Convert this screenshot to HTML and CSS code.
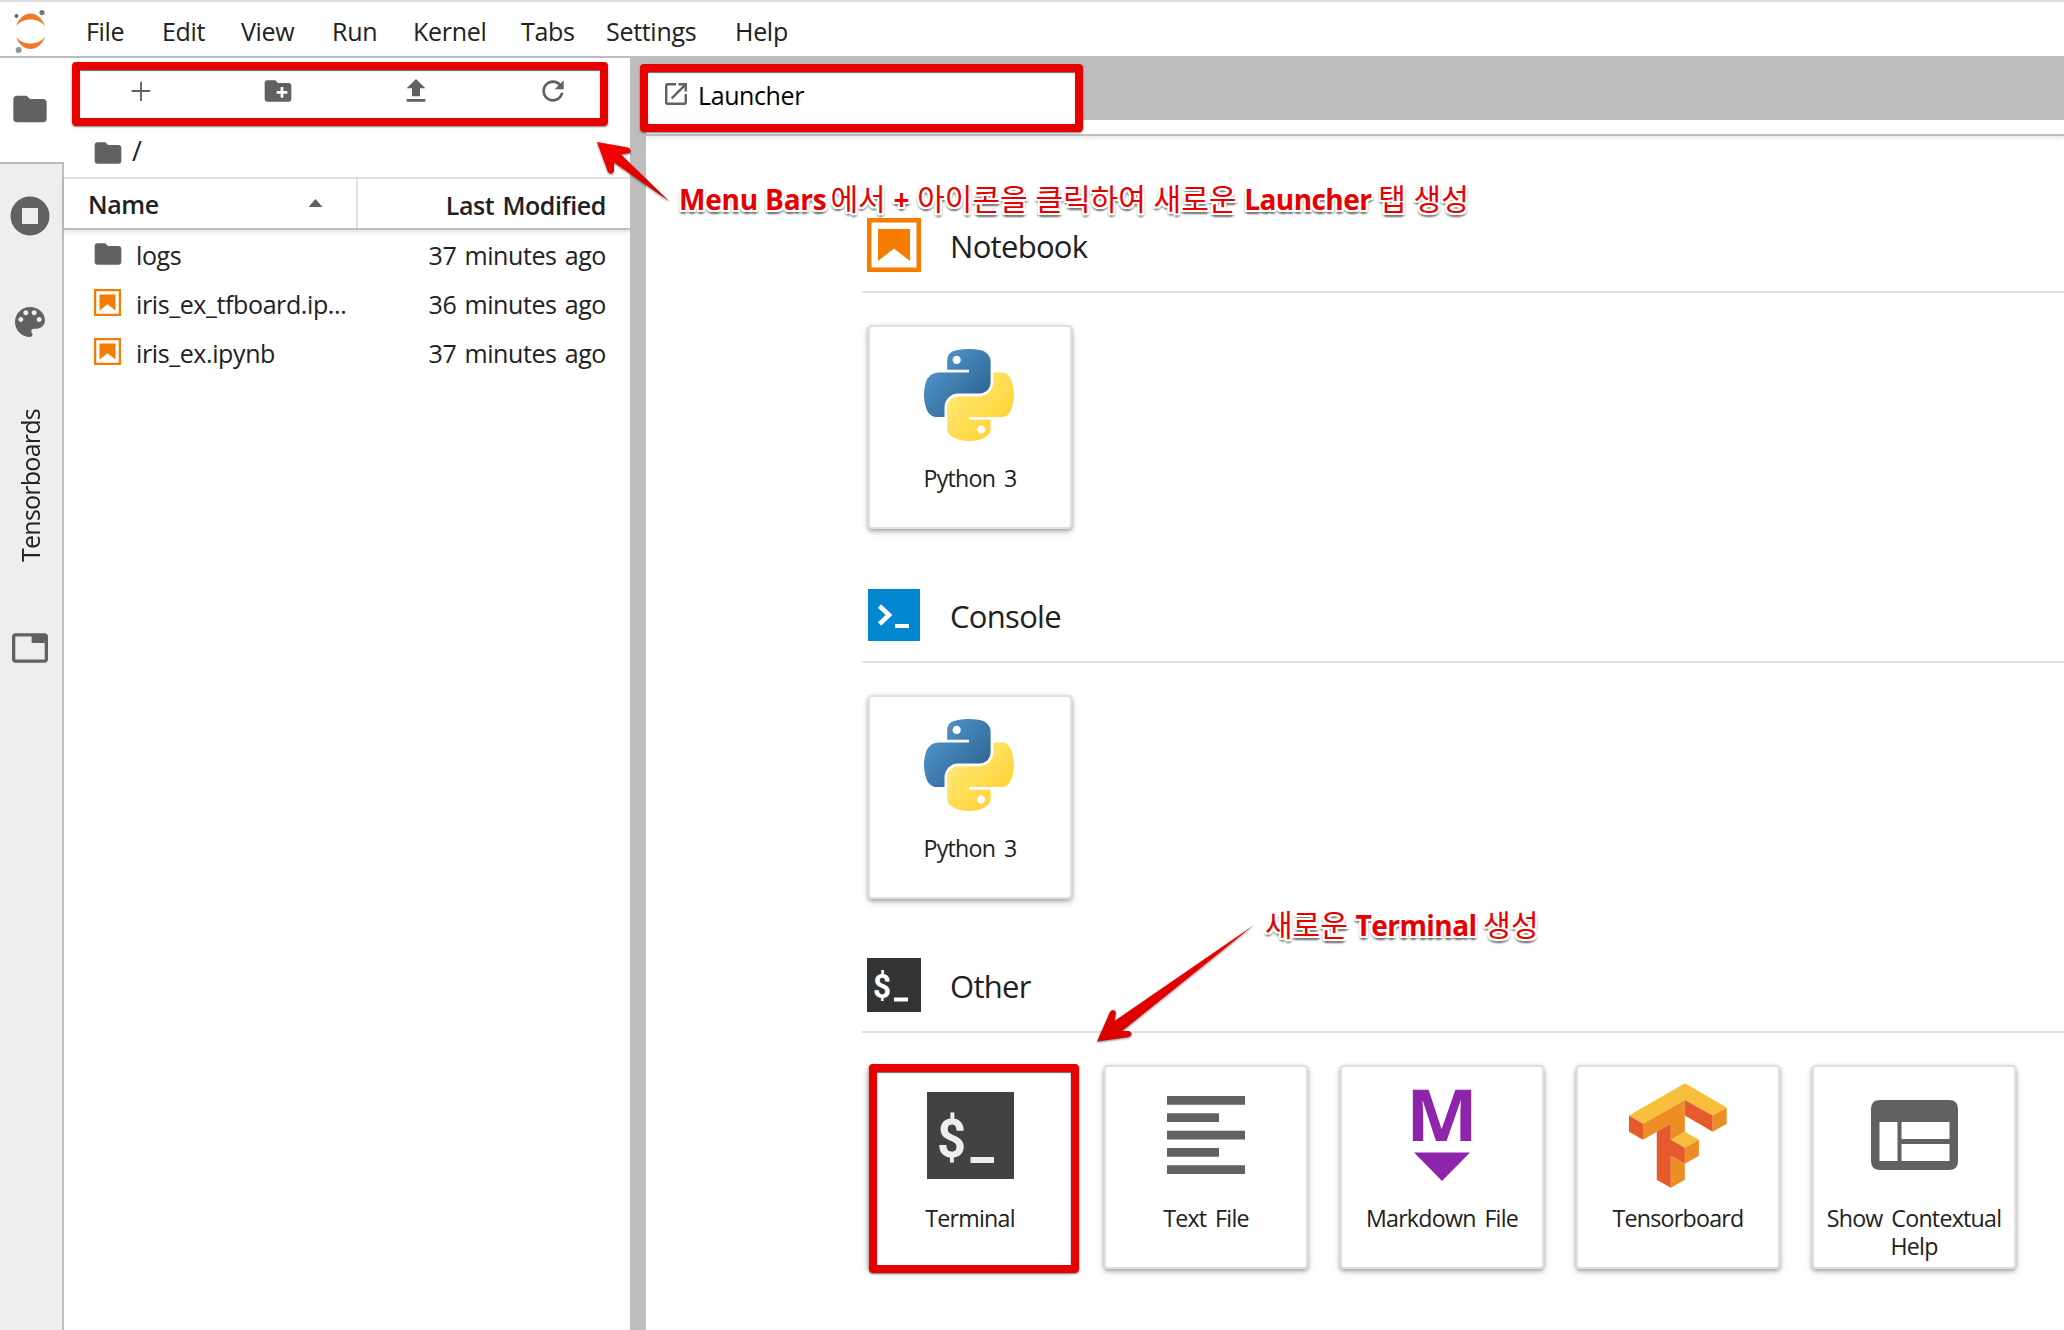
FILE: index.html
```html
<!DOCTYPE html>
<html lang="ko">
<head>
<meta charset="utf-8">
<title>JupyterLab</title>
<link rel="stylesheet" href="styles.css">
</head>
<body>
<svg class="defs" aria-hidden="true">
  <defs>
    <linearGradient id="py-blue" x1="0" y1="0" x2="0.8" y2="0.75"><stop offset="0" stop-color="#5a9fd4"/><stop offset="1" stop-color="#306998"/></linearGradient>
    <linearGradient id="py-yellow" x1="0.2" y1="0.2" x2="0.75" y2="0.75"><stop offset="0" stop-color="#ffe873"/><stop offset="1" stop-color="#ffd43b"/></linearGradient>
    <symbol id="folder" viewBox="0 0 24 24"><path d="M10 4H4c-1.1 0-1.99.9-1.99 2L2 18c0 1.1.9 2 2 2h16c1.1 0 2-.9 2-2V8c0-1.1-.9-2-2-2h-8l-2-2z"/></symbol>
    <symbol id="notebook" viewBox="0 0 54 54"><path fill="#f57c00" fill-rule="evenodd" d="M0 0H54V54H0zM4.5 4.5V49.500H49.500V4.500zM11 11H43V43L27 30.500L11 43z"/></symbol>
    <symbol id="python" viewBox="5.6 6.4 111.200 112.300" preserveAspectRatio="none">
      <path fill="url(#py-blue)" d="M60.510 6.398C55.927 6.419 51.549 6.810 47.698 7.492 36.351 9.496 34.291 13.692 34.291 21.429V31.648H61.104V35.054H24.229C16.436 35.054 9.613 39.738 7.479 48.648 5.017 58.861 4.908 65.234 7.479 75.898 9.385 83.836 13.936 89.492 21.729 89.492H30.948V77.242C30.948 68.392 38.605 60.585 47.698 60.585H74.479C81.934 60.585 87.885 54.447 87.885 46.960V21.429C87.885 14.163 81.755 8.704 74.479 7.492 69.873 6.725 65.094 6.377 60.510 6.398zM46.010 14.617C48.780 14.617 51.041 16.915 51.041 19.742 51.041 22.558 48.780 24.835 46.010 24.835 43.231 24.835 40.979 22.558 40.979 19.742 40.979 16.915 43.231 14.617 46.010 14.617z"/>
      <path fill="url(#py-yellow)" d="M91.229 35.054V46.960C91.229 56.191 83.403 63.960 74.479 63.960H47.698C40.362 63.960 34.291 70.239 34.291 77.585V103.117C34.291 110.383 40.610 114.657 47.698 116.742 56.185 119.237 64.324 119.688 74.479 116.742 81.229 114.787 87.885 110.854 87.885 103.117V92.898H61.104V89.492H101.291C109.084 89.492 111.988 84.056 114.698 75.898 117.497 67.499 117.378 59.422 114.698 48.648 112.772 40.891 109.094 35.054 101.291 35.054zM76.166 99.710C78.946 99.710 81.198 101.988 81.198 104.804 81.198 107.631 78.946 109.929 76.166 109.929 73.397 109.929 71.135 107.631 71.135 104.804 71.135 101.988 73.397 99.710 76.166 99.710z"/>
    </symbol>
  </defs>
</svg>

<div class="app">
  <header class="menubar">
    <svg class="logo" viewBox="0 0 34 44">
      <path fill="#f37726" d="M2 17C5 9 11 4.500 16.500 4.500S28 9 31 17C27 12.500 22 10.500 16.500 10.500S6 12.500 2 17zM2 28C5 36 11 40 16.500 40S28 36 31 28C27 32.500 22 34.500 16.500 34.500S6 32.500 2 28z"/>
      <circle cx="28" cy="3.600" r="2.600" fill="#767677"/><circle cx="2.500" cy="7" r="1.900" fill="#616262"/><circle cx="4.600" cy="41" r="3" fill="#989798"/>
    </svg>
    <nav class="menus"><span>File</span><span>Edit</span><span>View</span><span>Run</span><span>Kernel</span><span>Tabs</span><span>Settings</span><span>Help</span></nav>
  </header>

  <div class="workspace">
    <aside class="activity">
      <div class="act act-current"><svg class="i40"><use href="#folder"/></svg></div>
      <div class="act-rest">
        <svg class="running" viewBox="0 0 40 40"><circle cx="20" cy="20" r="19.500"/><rect x="12" y="12" width="16" height="16" rx="1" fill="#eee"/></svg>
        <svg class="palette" viewBox="3 3 18 18"><path d="M12 3c-4.970 0-9 4.030-9 9s4.030 9 9 9c.83 0 1.500-.67 1.500-1.500 0-.39-.15-.74-.39-1.010-.23-.26-.38-.61-.38-.99 0-.83.67-1.500 1.500-1.500H16c2.760 0 5-2.240 5-5 0-4.420-4.030-8-9-8zm-5.500 9c-.83 0-1.500-.67-1.500-1.500S5.670 9 6.500 9 8 9.670 8 10.500 7.330 12 6.500 12zm3-4C8.670 8 8 7.330 8 6.500S8.670 5 9.500 5s1.500.67 1.500 1.500S10.330 8 9.500 8zm5 0c-.83 0-1.500-.67-1.500-1.500S13.670 5 14.500 5s1.500.67 1.500 1.500S15.330 8 14.500 8zm3 4c-.83 0-1.500-.67-1.500-1.500S16.670 9 17.500 9s1.500.67 1.500 1.500-.67 1.500-1.500 1.500z"/></svg>
        <span class="vertical">Tensorboards</span>
        <svg class="tabs-icon" viewBox="1 3 22 18"><path d="M21 3H3c-1.100 0-2 .9-2 2v14c0 1.100.9 2 2 2h18c1.100 0 2-.9 2-2V5c0-1.100-.9-2-2-2zm0 16H3V5h10v4h8v10z"/></svg>
      </div>
    </aside>

    <section class="files">
      <div class="toolbar">
        <svg class="i32" viewBox="0 0 24 24"><path d="M19 12.700h-6.300v6.800h-1.400v-6.800H5v-1.400h6.300V5h1.400v6.300H19z"/></svg>
        <svg class="i32" viewBox="0 0 24 24"><path d="M20 6h-8l-2-2H4c-1.110 0-1.990.89-1.990 2L2 18c0 1.110.89 2 2 2h16c1.110 0 2-.89 2-2V8c0-1.110-.89-2-2-2zm-1 8h-3v3h-2v-3h-3v-2h3V9h2v3h3v2z"/></svg>
        <svg class="i32" viewBox="0 0 24 24"><path d="M9 16h6v-6h4l-7-7-7 7h4zm-4 2h14v2H5z"/></svg>
        <svg class="i32" viewBox="0 0 18 18"><path d="M9 13.500c-2.490 0-4.500-2.010-4.500-4.500S6.510 4.500 9 4.500c1.240 0 2.360.52 3.170 1.330L10 8h5V3l-1.760 1.760C12.150 3.680 10.660 3 9 3 5.690 3 3.010 5.690 3.010 9S5.690 15 9 15c2.970 0 5.430-2.160 5.900-5h-1.520c-.46 2-2.240 3.500-4.380 3.500z"/></svg>
      </div>
      <div class="crumbs"><svg class="i32"><use href="#folder"/></svg><span>/</span></div>
      <div class="list-head">
        <div class="col-name"><span>Name</span><svg class="caret" viewBox="0 0 14 8"><path d="M0 8L7 0L14 8z"/></svg></div>
        <div class="col-mod">Last Modified</div>
      </div>
      <div class="rows">
        <div class="row"><svg class="i32"><use href="#folder"/></svg><span class="fname">logs</span><span>37 minutes ago</span></div>
        <div class="row"><svg class="nb"><use href="#notebook"/></svg><span class="fname">iris_ex_tfboard.ip...</span><span>36 minutes ago</span></div>
        <div class="row"><svg class="nb"><use href="#notebook"/></svg><span class="fname">iris_ex.ipynb</span><span>37 minutes ago</span></div>
      </div>
    </section>

    <main class="dock">
      <div class="tabbar">
        <div class="tab"><svg class="launch" viewBox="3 3 18 18"><path d="M19 19H5V5h7V3H5c-1.110 0-2 .9-2 2v14c0 1.100.89 2 2 2h14c1.100 0 2-.9 2-2v-7h-2v7zM14 3v2h3.590l-9.830 9.830 1.410 1.410L19 6.410V10h2V3h-7z"/></svg><span>Launcher</span></div>
      </div>
      <div class="underbar"></div>
      <div class="launcher">
        <section class="group">
          <div class="group-head"><svg class="gicon"><use href="#notebook"/></svg><h2>Notebook</h2></div>
          <div class="cards">
            <div class="card"><div class="pic"><svg class="py"><use href="#python"/></svg></div><p>Python 3</p></div>
          </div>
        </section>
        <section class="group">
          <div class="group-head"><svg class="gicon" viewBox="0 0 54 54"><rect x="1" y="1" width="52" height="52" fill="#0288d1"/><path d="M12.500 18L22 27L12.500 36" fill="none" stroke="#fff" stroke-width="4.600"/><path fill="#fff" d="M28 36h14v4H28z"/></svg><h2>Console</h2></div>
          <div class="cards">
            <div class="card"><div class="pic"><svg class="py"><use href="#python"/></svg></div><p>Python 3</p></div>
          </div>
        </section>
        <section class="group">
          <div class="group-head"><svg class="gicon" viewBox="0 0 54 54"><rect width="54" height="54" fill="#333"/><text x="6" y="40" class="prompt" fill="#fff" font-size="33" textLength="18" lengthAdjust="spacingAndGlyphs">$</text><path fill="#fff" d="M27 39.500h14v4H27z"/></svg><h2>Other</h2></div>
          <div class="cards">
            <div class="card"><div class="pic"><svg class="term" viewBox="0 0 87 87"><rect width="87" height="87" fill="#424242"/><text x="10" y="65" class="prompt" fill="#eee" font-size="54" textLength="29" lengthAdjust="spacingAndGlyphs">$</text><path fill="#eee" d="M43.500 65h23.500v6H43.500z"/></svg></div><p>Terminal</p></div>
            <div class="card"><div class="pic"><svg class="textfile" viewBox="0 0 78 78"><path d="M0 0h78v8.700H0zM0 17.300h52v8.700H0zM0 34.700h78v8.700H0zM0 52h52v8.700H0zM0 69.300h78v8.700H0z"/></svg></div><p>Text File</p></div>
            <div class="card"><div class="pic"><svg class="md" viewBox="0 0 60 94"><text x="-6" y="52.500" class="md-m" textLength="72" lengthAdjust="spacingAndGlyphs">M</text><path fill="#8e24aa" d="M2 64.500H58L30 93z"/></svg></div><p>Markdown File</p></div>
            <div class="card"><div class="pic"><svg class="tf" viewBox="928 128 293 313">
              <path fill="#f8bf3c" d="M928 225L1095 128L1220 201L1178 225L1095 178L970 249zM1053 297L1095 273L1137 297L1095 321z"/>
              <path fill="#ed8e24" d="M970 249L1095 178V273L1053 297V249L970 297zM1178 225L1220 201V249L1178 273zM1095 321L1137 297V345L1095 369zM1053 345L1095 369V417L1053 441z"/>
              <path fill="#e55b2d" d="M928 225L970 249V297L928 273zM1095 178L1178 225V273L1095 225zM1011 273L1053 249V297L1095 321V369L1053 345V441L1011 417z"/>
            </svg></div><p>Tensorboard</p></div>
            <div class="card"><div class="pic"><svg class="help" viewBox="0 0 87 70"><path fill-rule="evenodd" d="M9 0H78Q87 0 87 9V61Q87 70 78 70H9Q0 70 0 61V9Q0 0 9 0zM8.500 22V61H26.500V22zM30.500 22V39H78.500V22zM30.500 44V61H78.500V44z"/></svg></div><p>Show Contextual Help</p></div>
          </div>
        </section>
      </div>
    </main>
  </div>

  <!-- annotations drawn over the interface -->
  <div class="mark mark-toolbar"></div>
  <div class="mark mark-tab"></div>
  <div class="mark mark-terminal"></div>
  <svg class="arrows" viewBox="0 0 2064 1330">
    <defs><linearGradient id="red" x1="0" y1="0" x2="0.3" y2="1"><stop offset="0" stop-color="#f80000"/><stop offset="1" stop-color="#d80000"/></linearGradient></defs>
    <path d="M597 142L628 147.500Q632 149.500 630 153L621 154.500L669.500 201.500L614 162.500L614 171Q612 176 608 172z"/>
    <path d="M1097 1041.500L1110 1012Q1113 1008 1116 1012L1114.500 1021L1254 925L1122 1031L1129 1031Q1134 1034 1129 1037z"/>
  </svg>
  <div class="note note-launcher"><b class="n1">Menu Bars</b> 에서 <b>+</b> 아이콘을 클릭하여 새로운 <b class="n2">Launcher</b> 탭 생성</div>
  <div class="note note-terminal">새로운 <b class="n2">Terminal</b> 생성</div>
</div>
</body>
</html>
```
FILE: styles.css
```css
* { box-sizing: border-box; }
body {
  margin: 0;
  font-family: "Open Sans", "Noto Sans CJK KR", sans-serif;
  font-size: 25px;
  letter-spacing: -.4px;
  word-spacing: 2px;
  color: #212121;
  background: #fff;
}
svg { display: block; fill: #616161; flex: none; }
.defs { position: absolute; width: 0; height: 0; }
.app { position: relative; width: 2064px; height: 1330px; overflow: hidden; display: flex; flex-direction: column; }

/* menu bar */
.menubar { height: 58px; flex: none; display: flex; border-top: 2px solid #dcdce2; border-bottom: 2px solid #bdbdbd; }
.logo { width: 34px; height: 44px; margin: 7px 0 0 14px; }
.menus { display: grid; grid-template-columns: 76px 79px 91px 81px 108px 85px 129px 80px; margin-left: 38px; line-height: 58px; letter-spacing: -.3px; }

.workspace { flex: 1; min-height: 0; display: flex; }

/* activity bar */
.activity { width: 64px; flex: none; display: flex; flex-direction: column; }
.act-current { height: 104px; padding: 31px 0 0 10px; }
.i40 { width: 40px; height: 40px; }
.act-rest { flex: 1; background: #eee; border-top: 2px solid #bdbdbd; border-right: 2px solid #bdbdbd; display: flex; flex-direction: column; align-items: center; padding-right: 2px; }
.running { width: 40px; height: 40px; margin-top: 32px; }
.palette { width: 30px; height: 30px; margin-top: 71px; }
.vertical { writing-mode: vertical-rl; transform: rotate(180deg); height: 156px; margin-top: 69px; line-height: 34px; white-space: nowrap; letter-spacing: -.75px; }
.tabs-icon { width: 36px; height: 30px; margin-top: 71px; }

/* file browser */
.files { width: 566px; flex: none; display: flex; flex-direction: column; }
.toolbar { height: 74px; display: flex; justify-content: space-around; align-items: flex-start; padding: 17px 8px 0; }
.i32 { width: 32px; height: 32px; }
.crumbs { height: 46px; display: flex; align-items: center; padding-left: 28px; gap: 8px; line-height: 40px; }
.crumbs svg { margin-top: -5px; }
.crumbs span { margin-top: -8px; font-size: 27px; }
.list-head { height: 53px; margin-top: -1px; display: flex; border-top: 2px solid #e0e0e0; border-bottom: 2px solid #bdbdbd; box-shadow: 0 2px 4px rgba(0,0,0,.12); font-weight: 600; line-height: 52px; }
.col-name { width: 294px; display: flex; justify-content: space-between; align-items: center; padding: 1px 33px 0 24px; border-right: 2px solid #e0e0e0; }
.caret { width: 15px; height: 8px; margin-top: -3px; }
.col-mod { flex: 1; text-align: right; padding-right: 24px; }
.rows { padding: 2px 24px 0 28px; }
.row { height: 49.200px; display: flex; align-items: center; line-height: 47px; }
.row span { margin-top: -2px; }
.row svg { margin-top: -5px; }
.row .nb { width: 27px; height: 27px; margin: -6px 3px 0 2px; }
.row .fname { flex: 1; margin-left: 12px; }

/* dock */
.dock { flex: 1; min-width: 0; border-left: 16px solid #bdbdbd; display: flex; flex-direction: column; margin-top: -2px; }
.tabbar { height: 64px; background: #bdbdbd; padding-top: 14px; }
.tab { width: 429px; height: 52px; background: #fff; display: flex; align-items: center; padding-left: 19px; gap: 11px; color: #000; }
.launch { width: 22px; height: 22px; margin-top: -5px; }
.tab span { line-height: 50px; margin-top: -2px; }
.underbar { height: 16px; border-bottom: 2px solid #bdbdbd; box-shadow: 0 2px 4px rgba(0,0,0,.1); }
.launcher { padding: 80px 0 0 216px; }
.group { height: 370px; }
.group-head { height: 77px; display: flex; padding: 2px 0 0 5px; border-bottom: 2px solid #e0e0e0; }
.gicon { width: 54px; height: 54px; }
h2 { margin: 0 0 0 29px; font-size: 31px; font-weight: 400; line-height: 56px; letter-spacing: -.7px; }
.cards { display: flex; gap: 32px; padding: 32px 0 0 6px; }
.card { width: 204px; height: 204px; flex: none; border: 2px solid #e0e0e0; border-radius: 4px; background: #fff; box-shadow: 0 2px 4px rgba(0,0,0,.3), 0 3px 8px rgba(0,0,0,.12); }
.pic { height: 136px; display: flex; justify-content: center; align-items: center; }
.card p { margin: 1px 2px 0; text-align: center; font-size: 23.200px; line-height: 28px; letter-spacing: -.75px; word-spacing: 3.500px; }
.py { width: 90px; height: 92px; margin-right: 2px; }
.term { width: 87px; height: 87px; }
.textfile { width: 78px; height: 78px; }
.md { width: 60px; height: 94px; overflow: visible; }
.tf { width: 98px; height: 105px; }
.help { width: 87px; height: 70px; }
.prompt { font-family: "Roboto", sans-serif; font-weight: 700; letter-spacing: 0; }
.md-m { font-family: "Open Sans", sans-serif; font-weight: 700; font-size: 72px; fill: #8e24aa; letter-spacing: 0; }

/* annotations */
.mark { position: absolute; border: 8px solid #e60000; border-radius: 4px; box-shadow: inset 0 1px 1px rgba(0,0,0,.6), 0 1px 2px rgba(0,0,0,.5); }
.mark-toolbar { left: 72px; top: 62px; width: 536px; height: 64px; }
.mark-tab { left: 640px; top: 64px; width: 443px; height: 68px; }
.mark-terminal { left: 869px; top: 1064px; width: 210px; height: 209px; }
.arrows { position: absolute; left: 0; top: 0; width: 2064px; height: 1330px; fill: url(#red); filter: drop-shadow(0 1px 1px rgba(0,0,0,.5)); }
.note { position: absolute; white-space: nowrap; color: #e60000; font-family: "Open Sans", "Noto Sans CJK KR", sans-serif; font-size: 30px; line-height: 40px; letter-spacing: 0; word-spacing: 0; text-shadow: -2px 0 #fff, 2px 0 #fff, 0 -2px #fff, 0 2px #fff, -2px 2px #fff, 2px 2px #fff, -2px -2px #fff, 2px -2px #fff, 0 4px 2px #777, 2px 3px 2px #888, -2px 3px 2px #999; }
.note b { font-size: 28px; }
.note .n1 { letter-spacing: -.2px; margin-right: -4px; }
.note .n2 { letter-spacing: -.55px; margin-right: -1px; }
.note-launcher { left: 679px; top: 179px; }
.note-terminal { left: 1265px; top: 905px; }
```
